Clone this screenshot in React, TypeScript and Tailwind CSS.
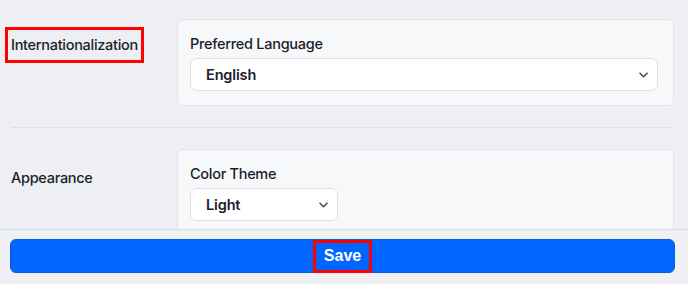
import React from "react";

function Chevron() {
  return (
    <svg width="9" height="6" viewBox="0 0 9 6" fill="none" className="shrink-0">
      <path d="M1 1.2l3.5 3.5 3.5-3.5" stroke="#4b5063" strokeWidth="1.6" strokeLinecap="round" strokeLinejoin="round" />
    </svg>
  );
}

function Select({ value, wide }: { value: string; wide?: boolean }) {
  return (
    <div
      className={`flex h-[33px] items-center justify-between rounded-[7px] border border-[#dfe0e4] bg-white pl-[15px] pr-[9px] ${
        wide ? "w-full" : "w-[148px]"
      }`}
    >
      <span className="text-[14.5px] font-semibold tracking-[-0.01em] text-[#1a1d2b]">{value}</span>
      <Chevron />
    </div>
  );
}

export default function App() {
  return (
    <div
      className="flex h-[284px] w-[688px] flex-col overflow-hidden bg-[#eeeff3] text-[#1a1d2b]"
      style={{ fontFamily: "Inter, 'Noto Sans', sans-serif" }}
    >
      <div className="flex-1 overflow-hidden pt-[19px] pr-[14px]">
        <div className="flex">
          <div className="w-[177px] shrink-0 pl-[5px] pt-[8px]">
            <span className="inline-block border-[3px] border-[#ff0000] px-[3px] py-[5px] text-[14.5px] font-medium leading-[20px] tracking-[-0.02em]">
              Internationalization
            </span>
          </div>
          <div className="flex-1 rounded-[6px] border border-[#e3e4e8] bg-[#f7f8fa] pl-[12px] pr-[15px] pb-[14px] pt-[14px]">
            <div className="text-[14.5px] font-medium leading-[20px] tracking-[-0.02em]">Preferred Language</div>
            <div className="mt-[4px]">
              <Select value="English" wide />
            </div>
          </div>
        </div>
        <div className="ml-[11px] mt-[21px] h-px bg-[#dfe0e4]" />
        <div className="mt-[21px] flex">
          <div className="w-[177px] shrink-0 pl-[11px] pt-[19px] text-[14.5px] font-medium leading-[20px] tracking-[-0.02em]">
            Appearance
          </div>
          <div className="flex-1 rounded-[6px] border border-[#e3e4e8] bg-[#f7f8fa] pl-[12px] pr-[15px] pb-[14px] pt-[14px]">
            <div className="text-[14.5px] font-medium leading-[20px] tracking-[-0.02em]">Color Theme</div>
            <div className="mt-[4px]">
              <Select value="Light" />
            </div>
          </div>
        </div>
      </div>
      <div className="shrink-0 border-t border-[#dcdde1] bg-[#eff0f3] px-[10px] pb-[11px] pt-[9px]">
        <button
          className="flex h-[34px] w-[665px] items-center justify-center rounded-[6px] border border-[#0b5bd6] bg-[#0066ff]"
          style={{ fontFamily: "'Liberation Sans', Arial, sans-serif" }}
        >
          <span className="flex h-[33px] items-center border-[3px] border-[#ff0000] px-[8px] text-[16px] font-bold text-white">
            Save
          </span>
        </button>
      </div>
    </div>
  );
}
